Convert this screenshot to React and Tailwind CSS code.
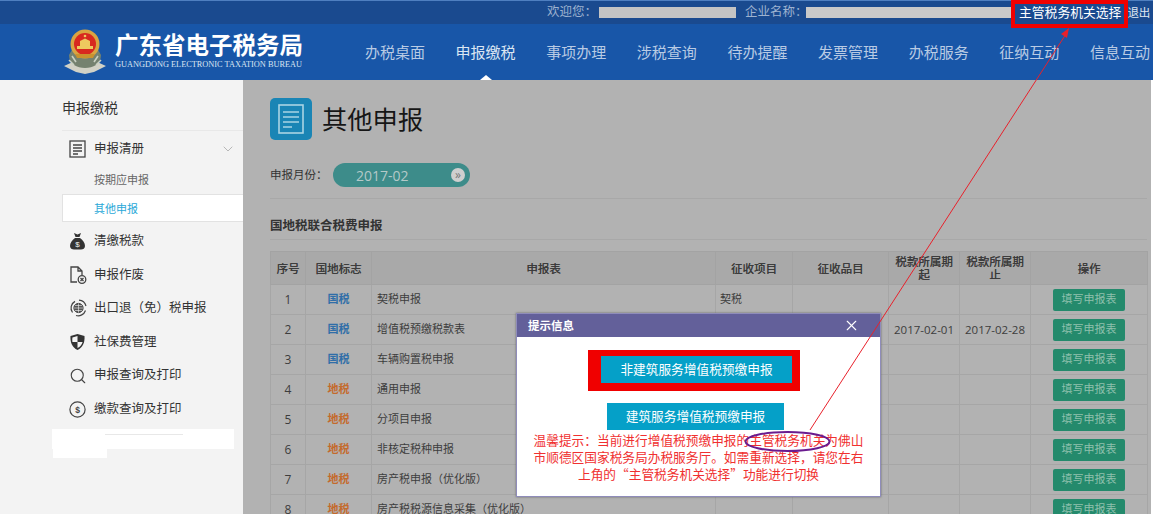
import React from 'react'
import { ChevronDown, Search, X } from 'lucide-react'

const navItems = ['办税桌面', '申报缴税', '事项办理', '涉税查询', '待办提醒', '发票管理', '办税服务', '征纳互动', '信息互动']

const rows = [
  { no: 1, tag: '国税', name: '契税申报', item: '契税' },
  { no: 2, tag: '国税', name: '增值税预缴税款表', start: '2017-02-01', end: '2017-02-28' },
  { no: 3, tag: '国税', name: '车辆购置税申报' },
  { no: 4, tag: '地税', name: '通用申报' },
  { no: 5, tag: '地税', name: '分项目申报' },
  { no: 6, tag: '地税', name: '非核定税种申报' },
  { no: 7, tag: '地税', name: '房产税申报（优化版）' },
  { no: 8, tag: '地税', name: '房产税税源信息采集（优化版）' },
]

function Emblem() {
  return (
    <svg width="44" height="46" viewBox="0 0 44 46" className="shrink-0">
      <path d="M1 37 L12 32 L22 36 L32 32 L43 37 L31 43 L22 45 L13 43 Z" fill="#d2d2c6" />
      <path d="M6 26 C6 35 14 39 22 39 C30 39 38 35 38 26 L34 19 L10 19 Z" fill="#75826f" />
      <path d="M9 27 L13 33 M35 27 L31 33 M6 31 L11 36 M38 31 L33 36" stroke="#c9d0c2" strokeWidth="1.6" />
      <circle cx="22" cy="15" r="14.5" fill="#d9a441" />
      <circle cx="22" cy="15" r="11" fill="#d8281f" />
      <path d="M14 17 H30 V20 H14 Z" fill="#eec95f" />
      <path d="M17 17 V12 L22 9.5 L27 12 V17 Z" fill="#eec95f" />
      <circle cx="22" cy="7" r="1.3" fill="#eec95f" />
      <path d="M12 25 H32 L30 29 H14 Z" fill="#c9922e" />
    </svg>
  )
}

function ListIcon() {
  return (
    <svg width="17" height="18" viewBox="0 0 17 18" fill="none" stroke="#444" strokeWidth="1.3">
      <rect x="1" y="1" width="15" height="16" />
      <path d="M4 5 H13 M4 8 H13 M4 11 H13 M4 14 H9" />
    </svg>
  )
}

function BagIcon() {
  return (
    <svg width="17" height="18" viewBox="0 0 17 18">
      <path d="M5 1 L8.5 2.5 L12 1 L10.5 5 H6.5 Z" fill="#333" />
      <path d="M6 6 H11 C14 8 16 11 16 14 C16 16.5 14 17.5 12 17.5 H5 C3 17.5 1 16.5 1 14 C1 11 3 8 6 6 Z" fill="#333" />
      <text x="8.5" y="15" textAnchor="middle" fontSize="8" fill="#f3f3f3" fontFamily="Liberation Sans, sans-serif">$</text>
    </svg>
  )
}

function VoidIcon() {
  return (
    <svg width="18" height="18" viewBox="0 0 18 18" fill="none" stroke="#444" strokeWidth="1.3">
      <path d="M8 16 H2 V1 H9 L13 5 V9 M9 1 V5 H13" />
      <circle cx="13" cy="13.5" r="3.8" />
      <path d="M11.5 12 L14.5 15 M14.5 12 L11.5 15" />
    </svg>
  )
}

function GlobeIcon() {
  return (
    <svg width="18" height="18" viewBox="0 0 18 18" fill="none" stroke="#444">
      <circle cx="9.5" cy="9" r="4.6" fill="#555" />
      <path d="M5 9 H14 M9.5 4.5 V13.5 M6 6.5 H13 M6 11.5 H13" stroke="#f3f3f3" strokeWidth="0.6" />
      <path d="M3.5 13.5 A7.5 7.5 0 0 1 6 2.4 M10 1.2 A7.8 7.8 0 0 1 17 7 M16.5 11.5 A7.8 7.8 0 0 1 7 16.5" strokeWidth="1.2" />
    </svg>
  )
}

function ShieldIcon() {
  return (
    <svg width="17" height="18" viewBox="0 0 17 18">
      <path d="M8.5 1 L15.5 3 C16 9 14 14.5 8.5 17 C3 14.5 1 9 1.5 3 Z" fill="#333" />
      <path d="M8.5 3 V9 H3.4 C3.2 7.5 3.2 6 3.4 4.6 Z M8.5 9 H13.6 C13 11.6 11.2 13.8 8.5 15 Z" fill="#f3f3f3" />
    </svg>
  )
}

function CoinIcon() {
  return (
    <svg width="17" height="17" viewBox="0 0 17 17" fill="none">
      <circle cx="8.5" cy="8.5" r="7.6" stroke="#444" strokeWidth="1.2" />
      <text x="8.5" y="11.5" textAnchor="middle" fontSize="8.5" fontWeight="700" fill="#444" fontFamily="Liberation Sans, sans-serif">$</text>
    </svg>
  )
}

function SideItem({ icon, label }) {
  return (
    <div className="flex items-center h-[33.6px] pl-[69px]">
      <span className="w-[25px] flex items-center">{icon}</span>
      <span className="text-[12.5px] text-[#333]">{label}</span>
    </div>
  )
}

function Sidebar() {
  return (
    <aside className="w-[243px] shrink-0 bg-[#f3f3f3] relative">
      <div className="ml-[62px] h-[51px] flex items-center pt-[5px] text-[14px] text-[#333] border-b border-[#e8e8e8]">申报缴税</div>
      <div className="flex items-center h-[36px] pl-[69px] pr-[7px]">
        <span className="w-[25px] flex items-center"><ListIcon /></span>
        <span className="text-[12.5px] text-[#333]">申报清册</span>
        <ChevronDown size={16} strokeWidth={1} className="ml-auto text-[#999]" />
      </div>
      <div className="h-[27px] pl-[94px] flex items-center text-[11px] text-[#666]">按期应申报</div>
      <div className="ml-[62px] h-[28px] pl-[31px] pt-[2px] flex items-center text-[11px] text-[#29a8d8] bg-white border border-r-0 border-[#e2e2e2]">其他申报</div>
      <div className="pt-[2.5px]">
        <SideItem icon={<BagIcon />} label="清缴税款" />
        <SideItem icon={<VoidIcon />} label="申报作废" />
        <SideItem icon={<GlobeIcon />} label="出口退（免）税申报" />
        <SideItem icon={<ShieldIcon />} label="社保费管理" />
        <SideItem icon={<Search size={18} strokeWidth={1.5} className="text-[#444]" />} label="申报查询及打印" />
        <SideItem icon={<CoinIcon />} label="缴款查询及打印" />
      </div>
      <div className="mt-[3px] ml-[52px] w-[182px] h-[20px] bg-white flex">
        <span className="ml-[53px] mt-[5px] w-[78px] h-px bg-[#e8e8e8]" />
      </div>
      <div className="ml-[53px] w-[54px] h-[9px] bg-white" />
    </aside>
  )
}

function TaxTable() {
  const th = 'border border-[#a3a3a3] font-normal text-[#3a3a3a] text-[11.5px] leading-[13px] [text-shadow:0.3px_0_0_#3a3a3a]'
  const td = 'border border-[#a6a6a6] h-[30px] p-0'
  const text = 'text-[11px] text-[#3d3d3d]'
  return (
    <table className="w-[877px] table-fixed border-collapse">
      <colgroup>
        <col className="w-[35px]" />
        <col className="w-[66px]" />
        <col className="w-[344px]" />
        <col className="w-[77px]" />
        <col className="w-[96px]" />
        <col className="w-[71px]" />
        <col className="w-[71px]" />
        <col className="w-[117px]" />
      </colgroup>
      <thead>
        <tr className="h-[33px] bg-[#a9a9a9]">
          <th className={th}>序号</th>
          <th className={th}>国地标志</th>
          <th className={th}>申报表</th>
          <th className={th}>征收项目</th>
          <th className={th}>征收品目</th>
          <th className={th}>税款所属期<br />起</th>
          <th className={th}>税款所属期<br />止</th>
          <th className={th}>操作</th>
        </tr>
      </thead>
      <tbody>
        {rows.map((row) => (
          <tr key={row.no}>
            <td className={`${td} text-center text-[12px] text-[#3d3d3d]`}>{row.no}</td>
            <td className={`${td} text-center text-[11px] font-bold ${row.tag === '国税' ? 'text-[#2f6ea8]' : 'text-[#c46a2c]'}`}>{row.tag}</td>
            <td className={`${td} ${text} pl-[5px]`}>{row.name}</td>
            <td className={`${td} ${text} pl-[4px]`}>{row.item}</td>
            <td className={td}></td>
            <td className={`${td} text-center text-[11.5px] text-[#3d3d3d]`}>{row.start}</td>
            <td className={`${td} text-center text-[11.5px] text-[#3d3d3d]`}>{row.end}</td>
            <td className={td}>
              <div className="mx-auto w-[72px] h-[22px] rounded-[2px] bg-[#248a6c] text-[#8fc0ac] text-[11px] flex items-center justify-center">填写申报表</div>
            </td>
          </tr>
        ))}
      </tbody>
    </table>
  )
}

function Content() {
  return (
    <main className="w-[908px] shrink-0 bg-[#b2b2b2] pl-[27px] overflow-hidden">
      <div className="flex items-center gap-[10px] pt-[18px]">
        <div className="w-[42px] h-[42px] rounded-[5px] bg-[#1a85b5] flex items-center justify-center">
          <svg width="26" height="30" viewBox="0 0 26 30" fill="none" stroke="#a9d4e4" strokeWidth="1.6">
            <rect x="1" y="1" width="24" height="28" />
            <path d="M5 8 H21 M5 13 H21 M5 18 H21 M5 23 H14" />
          </svg>
        </div>
        <h1 className="text-[25.3px] leading-none text-[#161616] mt-[2px]">其他申报</h1>
      </div>
      <div className="flex items-center mt-[23px] w-[877px]">
        <span className="w-[63px] text-[11.5px] text-[#333]">申报月份：</span>
        <div className="w-[137px] h-[24px] rounded-full bg-[#3d8c8a] flex items-center pl-[23px] pr-[5px]">
          <span className="text-[14px] text-[#b4c9c8]">2017-02</span>
          <span className="ml-auto w-[14px] h-[14px] rounded-full bg-[#cfcfcf] text-[#777] text-[12px] leading-[13px] text-center">»</span>
        </div>
      </div>
      <div className="w-[877px] mt-[11px] border-t border-[#a8a8a8]" />
      <div className="w-[877px] h-[41px] flex items-center pt-[14px] border-b border-[#a8a8a8] text-[12.5px] font-bold text-[#333]">国地税联合税费申报</div>
      <div className="mt-[11px]">
        <TaxTable />
      </div>
    </main>
  )
}

function Dialog() {
  return (
    <div className="absolute left-[516px] top-[313px] w-[365px] h-[184px] bg-white border border-[#8f8cba] shadow-[0_0_2px_#666]">
      <div className="h-[23px] bg-[#63609a] flex items-center justify-between pl-[11px] pr-[20px] text-white">
        <span className="text-[11.5px] font-bold">提示信息</span>
        <X size={17} strokeWidth={1.6} />
      </div>
      <div className="flex flex-col items-start">
        <div className="mt-[13px] ml-[71px] w-[212px] h-[41px] bg-[#f00000] pl-[13px] pt-[6px]">
          <button className="w-[191px] h-[27px] bg-[#05a0c8] text-white text-[12.7px] block">非建筑服务增值税预缴申报</button>
        </div>
        <button className="mt-[12px] ml-[90px] w-[177px] h-[27px] bg-[#05a0c8] text-white text-[12.7px]">建筑服务增值税预缴申报</button>
        <p className="mt-[1px] w-full text-center text-[12.7px] leading-[17px] text-[#f03030] whitespace-nowrap font-['Noto_Sans_CJK_SC',sans-serif]">
          温馨提示：当前进行增值税预缴申报的主管税务机关为佛山<br />
          市顺德区国家税务局办税服务厅。如需重新选择，请您在右<br />
          上角的“主管税务机关选择”功能进行切换
        </p>
      </div>
    </div>
  )
}

export default function App() {
  return (
    <div className="relative w-[1153px] h-[514px] overflow-hidden bg-white flex flex-col [text-spacing-trim:space-all] font-['Open_Sans','Noto_Sans_CJK_SC',sans-serif]">
      <div className="h-6 shrink-0 bg-[#1a4a8f] border-t border-[#4f7fc0] flex items-center text-[12.5px] text-[#9db2d0] pl-[547px] whitespace-nowrap">
        <span className="w-[52px]">欢迎您：</span>
        <span className="w-[137px] h-[11px] bg-[#c4c4c4]" />
        <span className="ml-[9px] w-[61px]">企业名称：</span>
        <span className="w-[206px] h-[11px] bg-[#c9c9c9]" />
        <span className="ml-[7px] text-[12.8px] text-white">主管税务机关选择</span>
        <span className="ml-[6px] text-[11.5px] text-[#dfe7f2]">退出</span>
      </div>

      <header className="h-14 shrink-0 bg-[#1856a8] flex items-center pl-[63px] relative">
        <Emblem />
        <div className="ml-[8px] w-[188px] text-white -mt-[3px]">
          <div className="text-[23.5px] leading-[27px] font-bold whitespace-nowrap">广东省电子税务局</div>
          <div className="text-[8.3px] leading-[9px] mt-[1px] font-['Liberation_Serif',serif] whitespace-nowrap text-[#dbe5f2]">GUANGDONG ELECTRONIC TAXATION BUREAU</div>
        </div>
        <nav className="ml-[62px] flex gap-[30.6px] text-[15px] text-[#b9cbe4] whitespace-nowrap">
          {navItems.map((item) => (
            <span key={item} className={item === '申报缴税' ? 'text-[#dbe6f3]' : ''}>{item}</span>
          ))}
        </nav>
        <span className="absolute left-[480px] bottom-0 w-0 h-0 border-x-[6px] border-x-transparent border-b-[5px] border-b-white" />
      </header>

      <div className="flex-1 flex min-h-0">
        <Sidebar />
        <Content />
      </div>

      <Dialog />

      {/* annotations drawn on top of the screenshot */}
      <div className="absolute left-[1011px] top-0 w-[117px] h-[28px] border-[4px] border-[#f00000]" />
      <svg className="absolute left-0 top-0 pointer-events-none" width="1153" height="514" viewBox="0 0 1153 514" fill="none">
        <path d="M810 430 L1066 34" stroke="#e8212b" strokeWidth="1" />
        <path d="M1069 28 L1061 34 L1067 38 Z" fill="#e8212b" />
        <ellipse cx="787.5" cy="441.5" rx="42" ry="9.5" stroke="#6a1b8f" strokeWidth="2" />
      </svg>
    </div>
  )
}
